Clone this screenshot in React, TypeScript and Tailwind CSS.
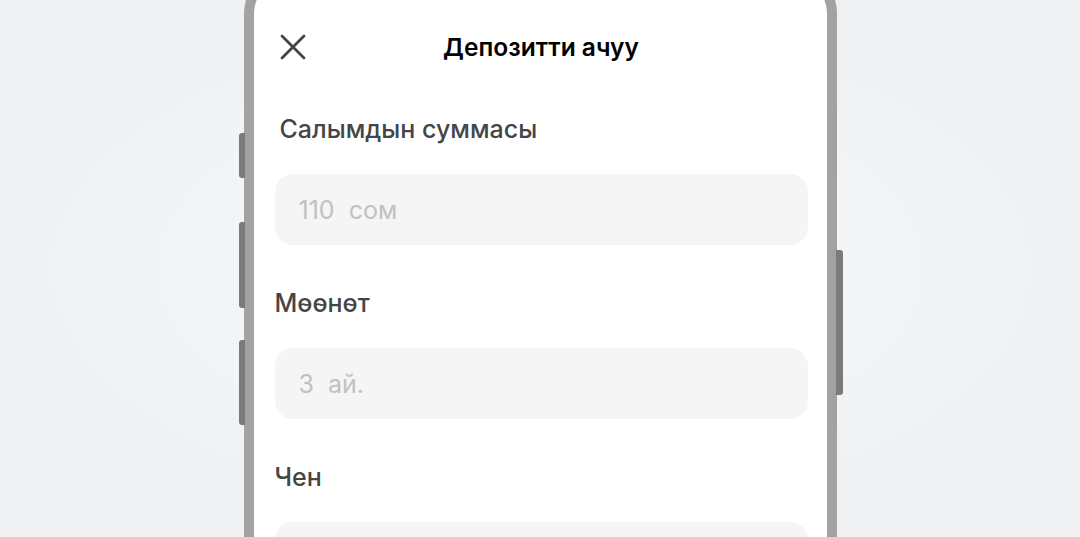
import React from 'react';

const font = { fontFamily: 'Inter, "Noto Sans", sans-serif' };

type FieldProps = {
  label: string;
  placeholder: string;
  labelClass?: string;
};

const Field: React.FC<FieldProps> = ({ label, placeholder, labelClass = '' }) => {
  return (
    <div className="flex flex-col">
      <div className={`text-[25px] leading-[28px] font-medium text-[#454545] ${labelClass}`}>{label}</div>
      <div className="mt-[31px] h-[71px] rounded-[18px] bg-[#f5f5f5] flex items-center px-[24px]">
        <span className="text-[25px] leading-[28px] text-[#c1c1c1] whitespace-pre">{placeholder}</span>
      </div>
    </div>
  );
};

export default function App() {
  return (
    <div
      className="h-[537px] w-full overflow-hidden bg-[radial-gradient(ellipse_at_center,#f6f7f8_0%,#f3f4f6_45%,#eef0f2_75%)]"
      style={font}
    >
      <div className="relative mx-auto w-[593px] -mt-[30px]">
        {/* side buttons */}
        <div className="absolute left-[-5px] top-[163px] h-[45px] w-[6px] rounded-l-[3px] bg-[#7b7b7b]" />
        <div className="absolute left-[-5px] top-[252px] h-[86px] w-[6px] rounded-l-[3px] bg-[#7b7b7b]" />
        <div className="absolute left-[-5px] top-[370px] h-[85px] w-[6px] rounded-l-[3px] bg-[#7b7b7b]" />
        <div className="absolute right-[-6px] top-[280px] h-[145px] w-[7px] rounded-r-[3px] bg-[#7b7b7b]" />

        <div className="rounded-t-[43px] border-x-[10px] border-t-[10px] border-[#a2a2a2] bg-white h-[620px]">
          <div className="pt-[43px] pl-[21px] pr-[19px]">
            <div className="relative flex h-[48px] items-center justify-center">
              <svg
                className="absolute left-[5px] top-[11px]"
                width="26"
                height="26"
                viewBox="0 0 26 26"
                fill="none"
                stroke="#444"
                strokeWidth="2.8"
                strokeLinecap="round"
              >
                <path d="M2 2L24 24M24 2L2 24" />
              </svg>
              <span className="text-[24.5px] font-semibold text-black">Депозитти ачуу</span>
            </div>

            <div className="mt-[44px] flex flex-col gap-[44px]">
              <Field label="Салымдын суммасы" placeholder="110  сом" labelClass="ml-[5px]" />
              <Field label="Мөөнөт" placeholder="3  ай." />
              <Field label="Чен" placeholder="" />
            </div>
          </div>
        </div>
      </div>
    </div>
  );
}
